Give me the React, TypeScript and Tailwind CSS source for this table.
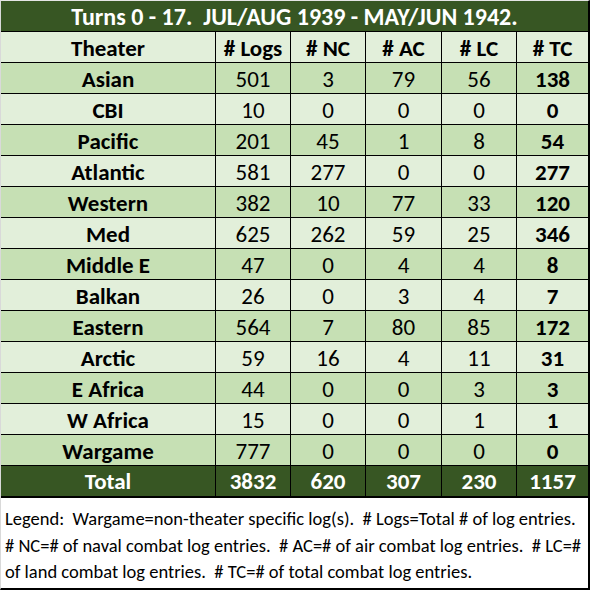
import React from "react";

const rows: [string, number, number, number, number, number][] = [
  ["Asian", 501, 3, 79, 56, 138],
  ["CBI", 10, 0, 0, 0, 0],
  ["Pacific", 201, 45, 1, 8, 54],
  ["Atlantic", 581, 277, 0, 0, 277],
  ["Western", 382, 10, 77, 33, 120],
  ["Med", 625, 262, 59, 25, 346],
  ["Middle E", 47, 0, 4, 4, 8],
  ["Balkan", 26, 0, 3, 4, 7],
  ["Eastern", 564, 7, 80, 85, 172],
  ["Arctic", 59, 16, 4, 11, 31],
  ["E Africa", 44, 0, 0, 3, 3],
  ["W Africa", 15, 0, 0, 1, 1],
  ["Wargame", 777, 0, 0, 0, 0],
];

const font = { fontFamily: "Carlito, Lato, 'Open Sans', sans-serif" };

export default function App() {
  const cell = "h-[31px] flex items-center justify-center border-b border-black leading-none pt-[2px]";
  return (
    <div className="w-[591px] h-[591px] bg-white" style={font}>
      <div className="w-[590px] border-l border-l-[#d9d9d9] border-t border-t-[#e5e5e5] border-r-2 border-r-black border-b-2 border-b-black">
        <div className="h-[31px] bg-[#375623] border-b border-black flex items-center justify-center text-white font-bold text-[24px] leading-none pt-[1px] whitespace-pre">
          {"Turns 0 - 17.  JUL/AUG 1939 - MAY/JUN 1942."}
        </div>
        <div className="grid grid-cols-[215px_75px_75px_76px_75px_71px] text-[23px] text-black">
          {["Theater", "# Logs", "# NC", "# AC", "# LC", "# TC"].map((h, i) => (
            <div key={h} className={`${cell} bg-[#e2efda] font-bold ${i < 5 ? "border-r" : ""}`}>
              {h}
            </div>
          ))}
          {rows.map((r, ri) => {
            const bg = ri % 2 === 0 ? "bg-[#c6e0b4]" : "bg-[#e2efda]";
            return r.map((v, i) => (
              <div
                key={`${ri}-${i}`}
                className={`${cell} ${bg} ${i === 0 || i === 5 ? "font-bold" : ""} ${i < 5 ? "border-r" : ""}`}
              >
                {v}
              </div>
            ));
          })}
          {["Total", 3832, 620, 307, 230, 1157].map((v, i) => (
            <div
              key={`t${i}`}
              className={`h-[32px] pt-[1px] leading-none flex items-center justify-center border-b-2 border-black bg-[#375623] text-white font-bold ${i < 5 ? "border-r" : ""}`}
            >
              {v}
            </div>
          ))}
        </div>
        <div className="h-[90px] pt-[8px] pl-[4px] text-[18.5px] leading-[26.5px] text-black whitespace-pre">
          <div>{"Legend:  Wargame=non-theater specific log(s).  # Logs=Total # of log entries."}</div>
          <div>{"# NC=# of naval combat log entries.  # AC=# of air combat log entries.  # LC=#"}</div>
          <div>{"of land combat log entries.  # TC=# of total combat log entries."}</div>
        </div>
      </div>
    </div>
  );
}
